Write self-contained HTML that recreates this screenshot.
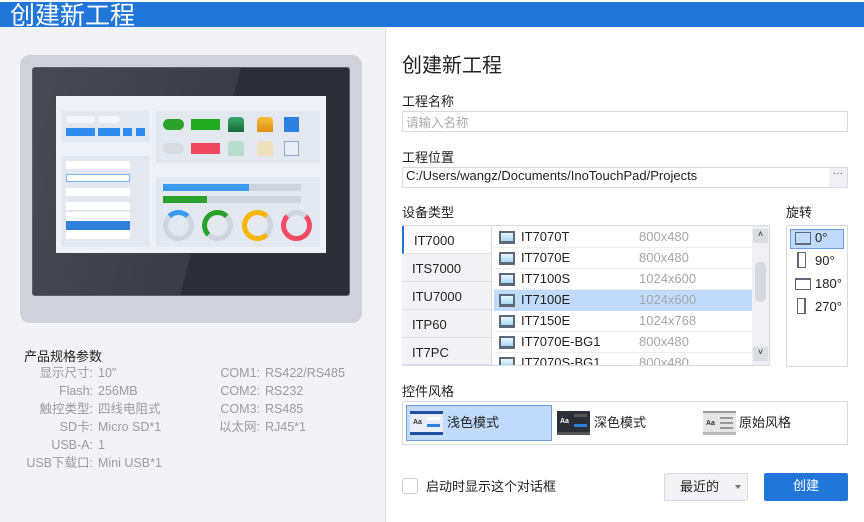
<!DOCTYPE html>
<html><head><meta charset="utf-8"><style>
*{margin:0;padding:0;box-sizing:border-box}
body{width:864px;height:522px;overflow:hidden;background:#fff;font-family:"Liberation Sans","Noto Sans CJK SC",sans-serif;position:relative;color:#222}
.a{position:absolute}
.t{font-size:13px;white-space:nowrap}
.g{color:#9a9aa2;font-size:12.5px;white-space:nowrap}
.inp{position:absolute;border:1px solid #d8dbe3;background:#fff}
.tab{position:absolute;left:402px;width:89px;height:28px;background:#f2f2f7;border-bottom:1px solid #e0e0e8;font-size:13px;padding:7px 0 0 10px}
.row{position:absolute;left:491px;width:260px;height:21px;font-size:13px}
.row .n{position:absolute;left:27px;top:2px}
.row .r{position:absolute;left:145px;top:2px;color:#a5a5ad}
.ic{position:absolute;left:5px;top:4px;width:16px;height:13px;border:2px solid #5f6878;border-bottom-width:3px;background:linear-gradient(#e8f6ff,#a8d6f2)}
.sp{font-size:7px;position:absolute;color:#333;white-space:nowrap}
</style></head><body>
<div class="a" style="left:0;top:2px;width:864px;height:25px;background:#2176d9"></div>
<div class="a" style="left:10px;top:0px;color:#fff;font-size:25px;font-family:'Noto Sans CJK SC',sans-serif;line-height:28px">创建新工程</div>
<div class="a" style="left:0;top:27px;width:386px;height:495px;background:#f2f2f7;border-right:1px solid #dcdce2"></div>

<!-- device -->
<div class="a" style="left:20px;top:55px;width:342px;height:268px;background:#cfd2da;border-radius:10px"></div>
<div class="a" style="left:32px;top:67px;width:318px;height:229px;border-radius:3px;border:1px solid #5b5f6b;background:linear-gradient(105deg,#474a53 0%,#3a3d46 55%,#2c2f38 55.3%,#2c2f38 100%)"></div>
<div class="a" style="left:56px;top:96px;width:270px;height:157px;background:#eef2f8"></div>
<div class="a" style="left:62px;top:111px;width:88px;height:31px;background:#e2e7f0"></div>
<div class="a" style="left:62px;top:156px;width:88px;height:91px;background:#e2e7f0"></div>
<div class="a" style="left:156px;top:111px;width:164px;height:52px;background:#e2e7f0"></div>
<div class="a" style="left:156px;top:177px;width:164px;height:70px;background:#e2e7f0"></div>
<div class="a" style="left:66px;top:116px;width:29px;height:7px;background:#f4f6fa;border-radius:3px"></div>
<div class="a" style="left:98px;top:116px;width:22px;height:7px;background:#f4f6fa;border-radius:3px"></div>
<div class="a" style="left:66px;top:128px;width:29px;height:8px;background:#2d8cf0"></div>
<div class="a" style="left:98px;top:128px;width:22px;height:8px;background:#2d8cf0"></div>
<div class="a" style="left:123px;top:128px;width:9px;height:8px;background:#2d8cf0"></div>
<div class="a" style="left:136px;top:128px;width:9px;height:8px;background:#2d8cf0"></div>
<div class="a" style="left:66px;top:161px;width:64px;height:8px;background:#fff"></div>
<div class="a" style="left:66px;top:174px;width:64px;height:8px;background:#fff;border:1px solid #7fb2f0"></div>
<div class="a" style="left:66px;top:188px;width:64px;height:8px;background:#fff"></div>
<div class="a" style="left:66px;top:202px;width:64px;height:8px;background:#fff"></div>
<div class="a" style="left:66px;top:212px;width:64px;height:27px;background:#fff"></div>
<div class="a" style="left:66px;top:221px;width:64px;height:9px;background:#2f7fdb"></div>
<div class="a" style="left:163px;top:119px;width:21px;height:11px;background:#2ba229;border-radius:6px"></div>
<div class="a" style="left:163px;top:143px;width:21px;height:11px;background:#d8dbe2;border-radius:6px"></div>
<div class="a" style="left:191px;top:119px;width:29px;height:11px;background:#22ab22"></div>
<div class="a" style="left:191px;top:143px;width:29px;height:11px;background:#f04860"></div>
<div class="a" style="left:228px;top:117px;width:16px;height:15px;background:linear-gradient(#3aa86a,#186a3a);border-radius:4px 4px 0 0"></div>
<div class="a" style="left:257px;top:117px;width:16px;height:15px;background:linear-gradient(#f6c040,#e08e10);border-radius:4px 4px 0 0"></div>
<div class="a" style="left:228px;top:141px;width:16px;height:15px;background:#b8dccb;border-radius:4px 4px 0 0"></div>
<div class="a" style="left:257px;top:141px;width:16px;height:15px;background:#efe0bd;border-radius:4px 4px 0 0"></div>
<div class="a" style="left:284px;top:117px;width:15px;height:15px;background:#2d7fe0"></div>
<div class="a" style="left:284px;top:141px;width:15px;height:15px;background:#e8eef8;border:1px solid #8fa8d0"></div>
<div class="a" style="left:163px;top:184px;width:138px;height:7px;background:#cfd4de"></div>
<div class="a" style="left:163px;top:184px;width:86px;height:7px;background:#3a9bf3"></div>
<div class="a" style="left:163px;top:196px;width:138px;height:7px;background:#cfd4de"></div>
<div class="a" style="left:163px;top:196px;width:44px;height:7px;background:#2aa12a"></div>
<div class="a" style="left:163px;top:210px;width:31px;height:31px;border-radius:50%;border:5px solid #cfd4de;border-top-color:#3a9bf3"></div>
<div class="a" style="left:202px;top:210px;width:31px;height:31px;border-radius:50%;border:5px solid #cfd4de;border-left-color:#2aa12a;border-top-color:#2aa12a"></div>
<div class="a" style="left:242px;top:210px;width:31px;height:31px;border-radius:50%;border:5px solid #f8b500;border-right-color:#cfd4de"></div>
<div class="a" style="left:281px;top:210px;width:31px;height:31px;border-radius:50%;border:5px solid #f24a62;border-top-color:#cfd4de"></div>

<!-- specs -->
<div class="a t" style="left:24px;top:346px">产品规格参数</div>
<div class="a g" style="left:0;top:364px;width:93px;text-align:right;line-height:18px">显示尺寸:<br>Flash:<br>触控类型:<br>SD卡:<br>USB-A:<br>USB下载口:</div>
<div class="a g" style="left:98px;top:364px;line-height:18px">10"<br>256MB<br>四线电阻式<br>Micro SD*1<br>1<br>Mini USB*1</div>
<div class="a g" style="left:180px;top:364px;width:80px;text-align:right;line-height:18px">COM1:<br>COM2:<br>COM3:<br>以太网:</div>
<div class="a g" style="left:265px;top:364px;line-height:18px">RS422/RS485<br>RS232<br>RS485<br>RJ45*1</div>

<!-- right -->
<div class="a" style="left:402px;top:49px;font-size:20px;font-family:'Noto Sans CJK SC',sans-serif">创建新工程</div>
<div class="a t" style="left:402px;top:91px">工程名称</div>
<div class="inp" style="left:402px;top:111px;width:446px;height:21px"></div>
<div class="a g" style="left:406px;top:112px;color:#aaa">请输入名称</div>
<div class="a t" style="left:402px;top:147px">工程位置</div>
<div class="inp" style="left:402px;top:167px;width:446px;height:21px"></div>
<div class="a" style="left:406px;top:168px;font-size:13px">C:/Users/wangz/Documents/InoTouchPad/Projects</div>
<div class="a" style="left:829px;top:168px;width:18px;height:19px;background:#f0f0f5;font-size:10px;text-align:center;color:#555">···</div>

<div class="a t" style="left:402px;top:202px">设备类型</div>
<div class="a" style="left:402px;top:225px;width:368px;height:141px;border:1px solid #d8dbe3"></div>
<div class="tab" style="top:226px;background:#fff;border-left:2px solid #2176d9">IT7000</div>
<div class="tab" style="top:254px">ITS7000</div>
<div class="tab" style="top:282px">ITU7000</div>
<div class="tab" style="top:310px">ITP60</div>
<div class="tab" style="top:338px;height:27px">IT7PC</div>
<div class="a" style="left:491px;top:226px;width:278px;height:139px;overflow:hidden;border-left:1px solid #d8dbe3">
<div class="row" style="left:2px;top:1px;border-bottom:1px solid #eee"><i class="ic"></i><span class="n">IT7070T</span><span class="r">800x480</span></div>
<div class="row" style="left:2px;top:22px;border-bottom:1px solid #eee"><i class="ic"></i><span class="n">IT7070E</span><span class="r">800x480</span></div>
<div class="row" style="left:2px;top:43px;border-bottom:1px solid #eee"><i class="ic"></i><span class="n">IT7100S</span><span class="r">1024x600</span></div>
<div class="row" style="left:2px;top:64px;background:#c0dbfb"><i class="ic"></i><span class="n">IT7100E</span><span class="r">1024x600</span></div>
<div class="row" style="left:2px;top:85px;border-bottom:1px solid #eee"><i class="ic"></i><span class="n">IT7150E</span><span class="r">1024x768</span></div>
<div class="row" style="left:2px;top:106px;border-bottom:1px solid #eee"><i class="ic"></i><span class="n">IT7070E-BG1</span><span class="r">800x480</span></div>
<div class="row" style="left:2px;top:127px"><i class="ic"></i><span class="n">IT7070S-BG1</span><span class="r">800x480</span></div>
<div class="a" style="left:260px;top:0;width:17px;height:139px;background:#f0f0f4"></div>
<div class="a" style="left:261px;top:3px;width:15px;height:14px;background:#dcdde3;font-size:9px;text-align:center">˄</div>
<div class="a" style="left:263px;top:36px;width:11px;height:40px;background:#d6d8de;border-radius:5px"></div>
<div class="a" style="left:261px;top:121px;width:15px;height:14px;background:#dcdde3;font-size:9px;text-align:center">˅</div>
</div>

<div class="a t" style="left:786px;top:202px">旋转</div>
<div class="a" style="left:786px;top:225px;width:62px;height:142px;border:1px solid #d8dbe3"></div>
<div class="a" style="left:790px;top:229px;width:54px;height:20px;background:#c0dbfb;border:1px solid #6b9be0"></div>
<div class="a" style="left:795px;top:232px;width:16px;height:13px;border:1px solid #5f6878;border-bottom-width:2px"></div>
<div class="a t" style="left:815px;top:230px">0°</div>
<div class="a" style="left:797px;top:252px;width:9px;height:16px;border:1px solid #5f6878;border-left-width:2px"></div>
<div class="a t" style="left:815px;top:253px">90°</div>
<div class="a" style="left:795px;top:278px;width:16px;height:12px;border:1px solid #5f6878;border-top-width:2px"></div>
<div class="a t" style="left:815px;top:276px">180°</div>
<div class="a" style="left:797px;top:298px;width:9px;height:16px;border:1px solid #5f6878;border-right-width:2px"></div>
<div class="a t" style="left:815px;top:299px">270°</div>

<div class="a t" style="left:402px;top:381px">控件风格</div>
<div class="a" style="left:402px;top:401px;width:446px;height:44px;border:1px solid #d8dbe3"></div>
<div class="a" style="left:406px;top:405px;width:146px;height:36px;background:#c0dbfb;border:1px solid #6b9be0"></div>
<div class="a" style="left:410px;top:411px;width:33px;height:24px;background:#e8eef8;border-top:3px solid #1f4e9c;border-bottom:3px solid #1f4e9c"><span class="sp" style="left:3px;top:5px;font-weight:bold">Aa</span><i class="a" style="left:17px;top:3px;width:13px;height:3px;background:#fff"></i><i class="a" style="left:17px;top:10px;width:13px;height:3px;background:#2d7fe0"></i></div>
<div class="a t" style="left:447px;top:412px">浅色模式</div>
<div class="a" style="left:557px;top:411px;width:33px;height:24px;background:#2d2f36;border-bottom:3px solid #555"><span class="sp" style="left:3px;top:7px;color:#fff;font-weight:bold">Aa</span><i class="a" style="left:17px;top:3px;width:13px;height:3px;background:#555"></i><i class="a" style="left:17px;top:13px;width:13px;height:3px;background:#2d7fe0"></i></div>
<div class="a t" style="left:594px;top:412px">深色模式</div>
<div class="a" style="left:703px;top:411px;width:33px;height:24px;background:#e6e6e6;border-top:2px solid #999;border-bottom:3px solid #bbb"><span class="sp" style="left:3px;top:7px;font-weight:bold">Aa</span><i class="a" style="left:17px;top:4px;width:13px;height:2px;background:#999"></i><i class="a" style="left:17px;top:9px;width:13px;height:2px;background:#999"></i><i class="a" style="left:17px;top:14px;width:13px;height:2px;background:#999"></i></div>
<div class="a t" style="left:739px;top:412px">原始风格</div>

<div class="a" style="left:402px;top:478px;width:16px;height:16px;border:1px solid #c8ccd6;border-radius:3px;background:#fff"></div>
<div class="a t" style="left:426px;top:476px">启动时显示这个对话框</div>
<div class="a" style="left:664px;top:473px;width:84px;height:28px;background:#f2f2f7;border:1px solid #d8dbe3;border-radius:2px"></div>
<div class="a t" style="left:680px;top:476px">最近的</div>
<div class="a" style="left:735px;top:485px;width:0;height:0;border-left:3px solid transparent;border-right:3px solid transparent;border-top:4px solid #777"></div>
<div class="a" style="left:764px;top:473px;width:84px;height:28px;background:#2176d9;border-radius:2px;color:#fff;font-size:13px;text-align:center;line-height:26px">创建</div>
</body></html>
